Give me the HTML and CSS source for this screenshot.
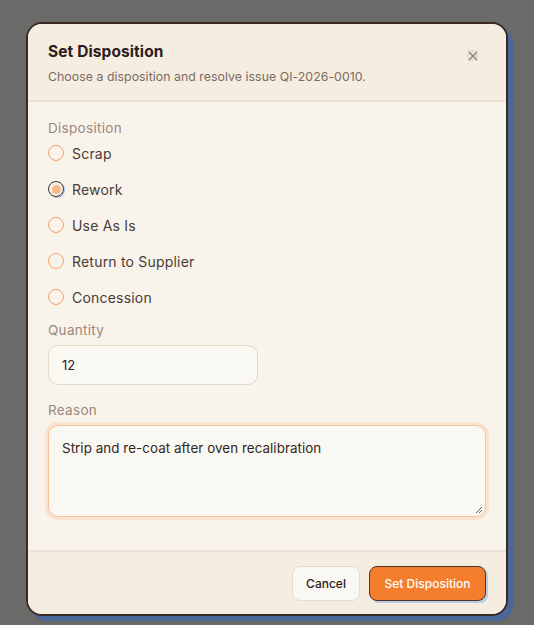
FILE: index.html
```html
<!DOCTYPE html>
<html lang="en">
<head>
<meta charset="utf-8">
<title>Set Disposition</title>
<link rel="stylesheet" href="styles.css">
</head>
<body>
<div class="backdrop">
  <div class="modal">
    <div class="modal-header">
      <div class="header-text">
        <h2 class="title">Set Disposition</h2>
        <p class="subtitle">Choose a disposition and resolve issue QI-2026-0010.</p>
      </div>
      <button class="close" aria-label="Close">
        <svg width="10" height="10" viewBox="0 0 10 10"><path d="M1 1L9 9M9 1L1 9" stroke="#8c7f77" stroke-width="1.2" fill="none"/></svg>
      </button>
    </div>
    <div class="modal-body">
      <div class="field-label">Disposition</div>
      <div class="radio-group">
        <label class="radio-row"><span class="radio"></span><span class="radio-text">Scrap</span></label>
        <label class="radio-row"><span class="radio checked"><span class="dot"></span></span><span class="radio-text">Rework</span></label>
        <label class="radio-row"><span class="radio"></span><span class="radio-text">Use As Is</span></label>
        <label class="radio-row"><span class="radio"></span><span class="radio-text">Return to Supplier</span></label>
        <label class="radio-row"><span class="radio"></span><span class="radio-text">Concession</span></label>
      </div>
      <div class="field-label qty-label">Quantity</div>
      <div class="input">12</div>
      <div class="field-label reason-label">Reason</div>
      <div class="textarea">Strip and re-coat after oven recalibration
        <svg class="grip" width="8" height="8" viewBox="0 0 8 8"><path d="M7 1L1 7M7 4L4 7" stroke="#6f625b" stroke-width="1" fill="none"/></svg>
      </div>
    </div>
    <div class="modal-footer">
      <button class="btn btn-cancel">Cancel</button>
      <button class="btn btn-primary">Set Disposition</button>
    </div>
  </div>
</div>
</body>
</html>
```
FILE: styles.css
```css
* { box-sizing: border-box; }
html, body { margin: 0; padding: 0; }
body {
  width: 534px;
  height: 625px;
  overflow: hidden;
  background: #6a6a69;
  font-family: "Inter", "Noto Sans", sans-serif;
}
.backdrop {
  padding: 22px 0 0 26px;
}
.modal {
  width: 482px;
  height: 594px;
  border: 2px solid #3a2822;
  border-radius: 16px;
  background: #f8f4ec;
  box-shadow: 5px 5px 0 #4b679a;
  display: flex;
  flex-direction: column;
  overflow: hidden;
}
.modal-header {
  background: #f5eddf;
  border-bottom: 2px solid #ece3d4;
  padding: 18px 20px 14px 20px;
  display: flex;
  justify-content: space-between;
  align-items: flex-start;
}
.title {
  margin: 0;
  font-size: 15.5px;
  line-height: 20px;
  font-weight: 700;
  letter-spacing: 0.1px;
  color: #2b201c;
}
.subtitle {
  margin: 6px 0 0 0;
  font-size: 12.3px;
  line-height: 18px;
  letter-spacing: 0.05px;
  color: #7a6b63;
}
.close {
  margin-top: 8px;
  margin-right: 8px;
  width: 11px;
  height: 11px;
  padding: 0;
  border: none;
  background: #e9e0d3;
  display: flex;
  align-items: center;
  justify-content: center;
}
.modal-body {
  flex: 1;
  padding: 17px 20px 0 20px;
  display: flex;
  flex-direction: column;
  align-items: flex-start;
}
.field-label {
  font-size: 13.5px;
  line-height: 18px;
  letter-spacing: 0.3px;
  color: #9b877c;
}
.radio-group {
  display: flex;
  flex-direction: column;
  gap: 4px;
}
.radio-row {
  height: 32px;
  display: flex;
  align-items: center;
  gap: 8px;
}
.radio {
  width: 16px;
  height: 16px;
  border-radius: 50%;
  border: 1.5px solid #f5a067;
  display: flex;
  align-items: center;
  justify-content: center;
}
.radio.checked {
  border: 1.5px solid #3b302b;
  box-shadow: 1px 1px 0 #a8c0e8;
}
.dot {
  width: 9px;
  height: 9px;
  border-radius: 50%;
  background: #f7b88c;
}
.radio-text {
  font-size: 14px;
  letter-spacing: 0.2px;
  color: #4a3b35;
}
.qty-label { margin-top: 8px; }
.input {
  margin-top: 6px;
  width: 210px;
  height: 40px;
  border: 1px solid #e3d9c8;
  border-radius: 10px;
  background: #faf8f3;
  padding: 0 13px;
  display: flex;
  align-items: center;
  font-size: 13px;
  color: #2b201c;
}
.reason-label { margin-top: 16px; }
.textarea {
  position: relative;
  margin-top: 6px;
  width: 438px;
  height: 92px;
  border: 1px solid #f6c39b;
  border-radius: 10px;
  background: #faf8f3;
  box-shadow: 0 0 0 3px #f9e3d0;
  padding: 13px 13px;
  font-size: 13.4px;
  line-height: 18px;
  letter-spacing: 0.05px;
  color: #2f2622;
}
.grip {
  position: absolute;
  right: 2px;
  bottom: 2px;
}
.modal-footer {
  height: 64px;
  background: #f5eddf;
  border-top: 2px solid #ece3d4;
  padding: 14px 20px 0 20px;
  display: flex;
  justify-content: flex-end;
  align-items: flex-start;
  gap: 9px;
}
.btn {
  height: 35px;
  border-radius: 8px;
  font-family: inherit;
  font-size: 12px;
  font-weight: 500;
  padding: 0;
}
.btn-cancel {
  width: 68px;
  background: #faf8f3;
  border: 1px solid #e4dbcd;
  color: #2b201c;
}
.btn-primary {
  width: 117px;
  background: #f57e2c;
  border: 1px solid #4a342b;
  color: #ffffff;
  box-shadow: 2px 2px 0 #bccbe2;
}
```
